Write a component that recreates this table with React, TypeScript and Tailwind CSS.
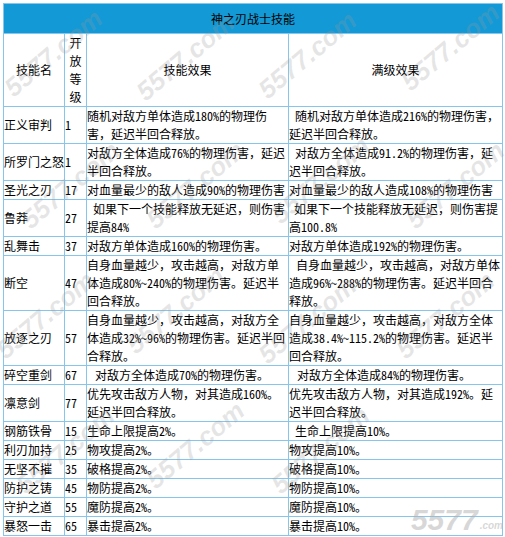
import React from 'react';

type Row = {
  name: string;
  lv: string;
  base: string;
  baseIndent?: string;
  max: string;
  maxIndent?: string;
};

const rows: Row[] = [
  { name: '正义审判', lv: '1', base: '随机对敌方单体造成180%的物理伤害，延迟半回合释放。', max: '随机对敌方单体造成216%的物理伤害，延迟半回合释放。', maxIndent: 'indent-[6px]' },
  { name: '所罗门之怒', lv: '1', base: '对敌方全体造成76%的物理伤害，延迟半回合释放。', max: '对敌方全体造成91.2%的物理伤害，延迟半回合释放。', maxIndent: 'indent-[6px]' },
  { name: '圣光之刃', lv: '17', base: '对血量最少的敌人造成90%的物理伤害', max: '对血量最少的敌人造成108%的物理伤害' },
  { name: '鲁莽', lv: '27', base: '如果下一个技能释放无延迟，则伤害提高84%', baseIndent: 'indent-[6px]', max: '如果下一个技能释放无延迟，则伤害提高100.8%', maxIndent: 'indent-[5px]' },
  { name: '乱舞击', lv: '37', base: '对敌方单体造成160%的物理伤害。', max: '对敌方单体造成192%的物理伤害。' },
  { name: '断空', lv: '47', base: '自身血量越少，攻击越高，对敌方单体造成80%~240%的物理伤害。延迟半回合释放。', max: '自身血量越少，攻击越高，对敌方单体造成96%~288%的物理伤害。延迟半回合释放。', maxIndent: 'indent-[7px]' },
  { name: '放逐之刃', lv: '57', base: '自身血量越少，攻击越高，对敌方全体造成32%~96%的物理伤害。延迟半回合释放。', max: '自身血量越少，攻击越高，对敌方全体造成38.4%~115.2%的物理伤害。延迟半回合释放。' },
  { name: '碎空重剑', lv: '67', base: '对敌方全体造成70%的物理伤害。', baseIndent: 'indent-[8px]', max: '对敌方全体造成84%的物理伤害。', maxIndent: 'indent-[8px]' },
  { name: '凛意剑', lv: '77', base: '优先攻击敌方人物，对其造成160%。延迟半回合释放。', max: '优先攻击敌方人物，对其造成192%。延迟半回合释放。' },
  { name: '钢筋铁骨', lv: '15', base: '生命上限提高2%。', max: '生命上限提高10%。', maxIndent: 'indent-[6px]' },
  { name: '利刃加持', lv: '25', base: '物攻提高2%。', max: '物攻提高10%。' },
  { name: '无坚不摧', lv: '35', base: '破格提高2%。', max: '破格提高10%。' },
  { name: '防护之铸', lv: '45', base: '物防提高2%。', max: '物防提高10%。' },
  { name: '守护之道', lv: '55', base: '魔防提高2%。', max: '魔防提高10%。' },
  { name: '暴怒一击', lv: '65', base: '暴击提高2%。', max: '暴击提高10%。' },
];

// faint site watermarks over the table
const marks = [
  { x: 8, y: 18 }, { x: 140, y: 22 }, { x: 262, y: 20 }, { x: 405, y: 12 },
  { x: 25, y: 150 }, { x: 150, y: 150 }, { x: 275, y: 145 }, { x: 410, y: 150 },
  { x: 0, y: 280 }, { x: 130, y: 275 }, { x: 262, y: 285 }, { x: 400, y: 280 },
  { x: 20, y: 415 }, { x: 150, y: 410 }, { x: 275, y: 415 },
];

const cell = 'border border-[#86c6ec] p-0 align-middle';

export default function App() {
  return (
    <div className="relative w-[505px] h-[537px] bg-white p-[3px] text-[12px] leading-[18px] text-black font-['Noto_Sans_Mono_CJK_SC','Noto_Sans_CJK_SC',sans-serif] overflow-hidden">
      <table className="w-[499px] table-fixed border-collapse">
        <colgroup>
          <col className="w-[61px]" />
          <col className="w-[22px]" />
          <col className="w-[202px]" />
          <col className="w-[214px]" />
        </colgroup>
        <tbody>
          <tr>
            <td colSpan={4} className={`${cell} h-[30px] bg-[#1399d5] text-center`}>
              神之刃战士技能
            </td>
          </tr>
          <tr>
            <td className={`${cell} text-center`}>技能名</td>
            <td className={`${cell} text-center`}>开放等级</td>
            <td className={`${cell} text-center`}>技能效果</td>
            <td className={`${cell} text-center`}>满级效果</td>
          </tr>
          {rows.map((r) => (
            <tr key={r.name}>
              <td className={cell}>{r.name}</td>
              <td className={cell}>{r.lv}</td>
              <td className={`${cell} ${r.baseIndent ?? ''}`}>{r.base}</td>
              <td className={`${cell} ${r.maxIndent ?? ''}`}>{r.max}</td>
            </tr>
          ))}
        </tbody>
      </table>

      {marks.map((m, i) => (
        <div
          key={i}
          className="absolute pointer-events-none -rotate-[40deg] origin-left text-[26px] leading-none font-bold italic text-[#9a9a9a]/25 font-['Liberation_Sans',sans-serif]"
          style={{ left: m.x, top: m.y + 60 }}
        >
          5577.com
        </div>
      ))}
      <div className="absolute right-[2px] bottom-[2px] pointer-events-none flex items-end gap-[2px] text-[#b0b0b0]/50 font-['Liberation_Sans',sans-serif] italic font-bold">
        <span className="text-[30px] leading-none">5577</span>
        <span className="text-[10px] leading-none mb-[4px]">.com</span>
      </div>
    </div>
  );
}
